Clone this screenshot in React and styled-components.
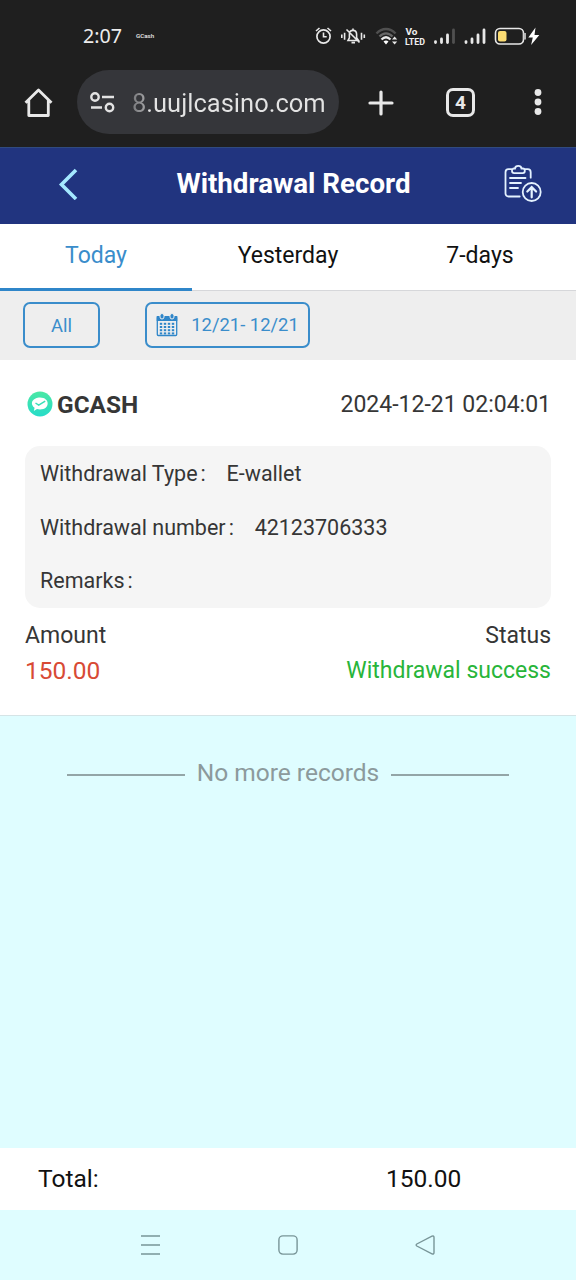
import React from "react";
import styled, { createGlobalStyle } from "styled-components";

const records = [
  { label: "Withdrawal Type", value: "E-wallet" },
  { label: "Withdrawal number", value: "42123706333" },
  { label: "Remarks", value: "" },
];
const tabs = ["Today", "Yesterday", "7-days"];

function StatusIcons() {
  return (
    <svg width="230" height="24" viewBox="312 24 230 24" fill="none" stroke="#e8e8e8">
      {/* alarm */}
      <circle cx="323.5" cy="36.5" r="6.6" strokeWidth="1.7" />
      <path d="M323.5 32.5v4.3h3.2M316 31l3.5-3M331 31l-3.5-3" strokeWidth="1.6" />
      {/* muted bell */}
      <path
        d="M348 40.5h10.5l-1.9-2.7v-3.5c0-5.2-7.2-5.2-7.2 0v3.5zM351.5 42.600h3.500M346.500 29.500l13 13M353 28.500v2"
        strokeWidth="1.6"
      />
      <path d="M344.6 32.8v7M341.8 34.5v3.500M361.500 32.800v7M364.300 34.500v3.500" strokeWidth="1.6" />
      {/* wifi */}
      <path d="M376.5 33.5c5.5-6 13.500-6 19 0" stroke="#505050" strokeWidth="2.4" />
      <path d="M379.5 36.5c4-4.200 9-4.200 13 0" stroke="#666" strokeWidth="2.4" />
      <path d="M381.5 39.5c3-2.900 6-2.900 9 0" strokeWidth="2.4" />
      <path d="M383.5 41.5l2.5 3 2.500-3c-1.700-1.200-3.300-1.200-5 0z" fill="#fff" stroke="none" />
      <path d="M392 39.5l2.6-3 2.600 3zM392 41.500l2.600 3 2.600-3z" fill="#e8e8e8" stroke="none" />
      {/* volte */}
      <g fill="#f0f0f0" stroke="none" fontFamily="Roboto, sans-serif" fontWeight="700">
        <text x="405.5" y="35" fontSize="9" textLength="12" lengthAdjust="spacingAndGlyphs">Vo</text>
        <text x="405" y="44.500" fontSize="9.5" textLength="20" lengthAdjust="spacingAndGlyphs">LTED</text>
      </g>
      {/* signal */}
      <g strokeWidth="2.8" strokeLinecap="round">
        <path d="M435.5 41.6v1M441.5 39v3.6M447.5 35v7.6" />
        <path d="M453.5 30v12.6" stroke="#505050" />
        <path d="M466 41.6v1M472 39v3.6M478 35v7.6M484 30v12.6" />
      </g>
      {/* battery */}
      <rect x="495.5" y="28.5" width="28" height="15.5" rx="4.5" strokeWidth="1.6" />
      <rect x="498" y="31" width="8.5" height="10.5" rx="2" fill="#fbdc72" stroke="none" />
      <path d="M524.8 33v6.5" stroke="#b5b5b5" strokeWidth="2.4" />
      <path d="M535.5 27.5l-7.2 10h4.500l-1.700 7.500 8.200-10h-4.800z" fill="#fff" stroke="none" />
    </svg>
  );
}

function HomeIcon() {
  return (
    <svg width="30" height="32" viewBox="0 0 30 32" fill="none" stroke="#e8e8e8" strokeWidth="2.8" strokeLinejoin="round">
      <path d="M1.5 15.8L14.5 3l13 12.800M4.800 13v15.500h19.500V13" />
    </svg>
  );
}

function SiteIcon() {
  return (
    <svg width="26" height="22" viewBox="0 0 26 22" fill="none" stroke="#e3e3e3" strokeWidth="2.4">
      <circle cx="5" cy="5" r="3.7" />
      <path d="M12 5h12M1 15.5h11" />
      <circle cx="19.5" cy="15.5" r="3.7" />
    </svg>
  );
}

function ClipboardIcon() {
  return (
    <svg width="38" height="38" viewBox="504 164 38 38" fill="none" stroke="#e4f2ff" strokeWidth="1.8" strokeLinecap="round">
      <path d="M511.5 168.2h-3a3 3 0 0 0-3 3v21.300a3 3 0 0 0 3 3h11.200M525.500 168.200h2.200a3 3 0 0 1 3 3v5.500" />
      <path d="M514 167.5h1c.5-3.400 6-3.400 6.500 0h1.300c2.700 0 2.700 4.700 0 4.700h-8.700c-2.800 0-2.800-4.700-.1-4.700z" />
      <path d="M510 177h15.5M510 182h11M510 187h8" />
      <circle cx="531.7" cy="191" r="9" />
      <path d="M531.7 196.3v-9.800M527.300 190.500l4.400-4.400 4.400 4.400" strokeWidth="2.2" />
    </svg>
  );
}

function CalendarIcon() {
  const dots = [];
  for (let row = 0; row < 4; row++) {
    for (let col = 0; col < 4; col++) {
      dots.push(<rect key={row + "-" + col} x={3.8 + col * 4} y={9.8 + row * 3.2} width="2.4" height="2" />);
    }
  }
  return (
    <svg width="22" height="24" viewBox="0 0 22 24" fill="#2f86c9">
      <rect x="1.3" y="3.7" width="19.4" height="18.8" rx="1" fill="none" stroke="#2f86c9" strokeWidth="1.3" />
      <rect x="0.7" y="3" width="20.6" height="5" />
      <rect x="4" y="0.5" width="4" height="5.5" rx="2" stroke="#eee" />
      <rect x="14" y="0.5" width="4" height="5.5" rx="2" stroke="#eee" />
      {dots}
    </svg>
  );
}

function WalletLogo() {
  return (
    <svg width="26" height="26" viewBox="0 0 26 26">
      <defs>
        <linearGradient id="mint" x1="0" y1="0" x2="0" y2="1">
          <stop offset="0" stopColor="#4be8a4" />
          <stop offset="1" stopColor="#26dcc9" />
        </linearGradient>
      </defs>
      <circle cx="13" cy="13" r="12.5" fill="url(#mint)" />
      <path d="M6.8 20l.8-3.200C1.800 12 6.500 6.500 13 6.500c10.300 0 10.300 12 0 12-1.200 0-2-.1-3-.4z" fill="#fff" />
      <path d="M8.5 12l3.200 2.200 6.500-4" fill="none" stroke="#3adfb8" strokeWidth="1.5" />
    </svg>
  );
}

function App() {
  return (
    <Phone>
      <GlobalStyle />
      <StatusBar>
        <Clock>2:07</Clock>
        <Carrier>GCash</Carrier>
        <StatusIcons />
      </StatusBar>
      <BrowserBar>
        <HomeIcon />
        <AddressPill>
          <SiteIcon />
          <Address>8.uujlcasino.com</Address>
        </AddressPill>
        <svg width="26" height="26" viewBox="0 0 26 26" stroke="#e8e8e8" strokeWidth="3.2" strokeLinecap="round">
          <path d="M13 2v22M2 13h22" />
        </svg>
        <TabCount>4</TabCount>
        <svg width="8" height="28" viewBox="0 0 8 28" fill="#e8e8e8">
          <circle cx="4" cy="4.5" r="3.4" />
          <circle cx="4" cy="14" r="3.4" />
          <circle cx="4" cy="23.5" r="3.4" />
        </svg>
      </BrowserBar>

      <PageHeader>
        <svg width="20" height="32" viewBox="0 0 20 32" fill="none" stroke="#a4e8ff" strokeWidth="3.6">
          <path d="M18 2L3.5 16.5 18 31" />
        </svg>
        <Title>Withdrawal Record</Title>
        <ClipboardIcon />
      </PageHeader>
      <TabRow>
        {tabs.map((tab, i) => (
          <Tab key={tab} $active={i === 0}>{tab}</Tab>
        ))}
      </TabRow>
      <FilterRow>
        <FilterButton $width={77}>All</FilterButton>
        <FilterButton $width={165}>
          <CalendarIcon />
          <DateRange>12/21- 12/21</DateRange>
        </FilterButton>
      </FilterRow>

      <Card>
        <CardTop>
          <WalletLogo />
          <WalletName>GCASH</WalletName>
          <DateText>2024-12-21 02:04:01</DateText>
        </CardTop>
        <Details>
          {records.map((item) => (
            <DetailRow key={item.label}>
              <span>{item.label}</span>
              <Colon>:</Colon>
              <span>{item.value}</span>
            </DetailRow>
          ))}
        </Details>
        <Summary>
          <SummaryText>Amount</SummaryText>
          <SummaryText>Status</SummaryText>
        </Summary>
        <Summary>
          <AmountText>150.00</AmountText>
          <StatusText>Withdrawal success</StatusText>
        </Summary>
      </Card>

      <Empty>
        <Line />
        <EmptyText>No more records</EmptyText>
        <Line />
      </Empty>
      <TotalBar>
        <TotalLabel>Total:</TotalLabel>
        <span>150.00</span>
      </TotalBar>
      <NavBar>
        <svg width="20" height="20" viewBox="0 0 20 20" stroke="#789598" strokeWidth="1.5">
          <path d="M0 1h19M0 10h19M0 19h19" />
        </svg>
        <svg width="20" height="20" viewBox="0 0 20 20" fill="none" stroke="#789598" strokeWidth="1.4">
          <rect x="0.9" y="0.9" width="18.2" height="18.2" rx="4" />
        </svg>
        <svg width="20" height="20" viewBox="0 0 20 20" fill="none" stroke="#789598" strokeWidth="1.4">
          <path d="M1.8 9L17 1.2q2-.8 2 1.300v15q0 2.200-2 1.300L1.800 11q-1.300-1 0-2z" />
        </svg>
      </NavBar>
    </Phone>
  );
}

export default App;

const GlobalStyle = createGlobalStyle`
  * {
    box-sizing: border-box;
  }
  body {
    margin: 0;
    background: #dffdff;
  }
  svg {
    flex-shrink: 0;
    display: block;
  }
`;
const Phone = styled.div`
  width: 576px;
  height: 1280px;
  display: flex;
  flex-direction: column;
  background: #dffdff;
  font-family: Roboto, sans-serif;
  white-space: nowrap;
  overflow: hidden;
`;
const StatusBar = styled.div`
  height: 70px;
  display: flex;
  align-items: center;
  padding: 2px 34px 0 83px;
  background: #1f1f1f;
  color: #ececec;
  svg {
    margin-left: auto;
  }
`;
const Clock = styled.span`
  width: 53px;
  padding-bottom: 1px;
  font-family: "Noto Sans", sans-serif;
  font-size: 19.7px;
`;
const Carrier = styled.span`
  font-size: 6.2px;
  font-weight: 500;
`;
const BrowserBar = styled.div`
  height: 78px;
  display: flex;
  align-items: flex-start;
  padding: 0 34px 0 24px;
  background: #1f1f1f;
  border-bottom: 1px solid #304a80;
  > svg:first-child {
    margin: 17px 23px 0 0;
  }
  > svg:nth-child(3) {
    margin: 20px 0 0 29px;
  }
  > svg:last-child {
    margin: 18px 0 0 auto;
  }
`;
const AddressPill = styled.div`
  width: 262px;
  height: 64px;
  display: flex;
  align-items: center;
  gap: 16px;
  padding: 2px 0 0 13px;
  border-radius: 32px;
  background: #35363a;
`;
const Address = styled.span`
  font-size: 25.5px;
  background: linear-gradient(90deg, #77787b, #a0a0a2 13px, #e3e3e3 16px);
  background-clip: text;
  color: transparent;
`;
const TabCount = styled.div`
  width: 29px;
  height: 29px;
  display: flex;
  align-items: center;
  justify-content: center;
  margin: 18px 0 0 52px;
  border: 3px solid #e8e8e8;
  border-radius: 7px;
  color: #e8e8e8;
  font-size: 19px;
  font-weight: 700;
`;
const PageHeader = styled.div`
  height: 76px;
  display: flex;
  align-items: center;
  justify-content: space-between;
  padding: 0 34px 5px 58px;
  background: #21347f;
`;
const Title = styled.h1`
  margin: 0 0 0 5px;
  color: #fff;
  font-size: 27.7px;
  font-weight: 700;
`;
const TabRow = styled.div`
  height: 67px;
  display: flex;
  background: #fff;
`;
const Tab = styled.div`
  flex: 1;
  display: flex;
  align-items: center;
  justify-content: center;
  padding-bottom: ${(p) => (p.$active ? "1px" : "3px")};
  border-bottom: ${(p) => (p.$active ? "3px solid #2f86c9" : "1px solid #d6d7da")};
  color: ${(p) => (p.$active ? "#3a8dcb" : "#111")};
  font-size: 23px;
`;
const FilterRow = styled.div`
  height: 69px;
  display: flex;
  gap: 45px;
  padding: 11px 23px;
  background: #eee;
`;
const FilterButton = styled.div`
  width: ${(p) => p.$width}px;
  height: 46px;
  display: flex;
  align-items: center;
  justify-content: center;
  gap: 13px;
  border: 2px solid #3a8dcb;
  border-radius: 7px;
  color: #3a8dcb;
  font-size: 18.4px;
`;
const DateRange = styled.span`
  padding-bottom: 2px;
`;
const Card = styled.div`
  height: 356px;
  padding: 0 25px;
  background: #fff;
  border-bottom: 1px solid #d5e4e6;
  color: #363636;
`;
const CardTop = styled.div`
  height: 86px;
  display: flex;
  align-items: center;
  padding: 2px 0 0 2px;
`;
const WalletName = styled.span`
  margin-left: 4px;
  font-size: 24.4px;
  font-weight: 700;
`;
const DateText = styled.span`
  margin-left: auto;
  font-size: 23px;
`;
const Details = styled.div`
  height: 162px;
  padding-top: 1px;
  border-radius: 15px;
  background: #f5f5f5;
`;
const DetailRow = styled.div`
  height: 53.5px;
  display: flex;
  align-items: center;
  padding-left: 15px;
  font-size: 21.5px;
`;
const Colon = styled.span`
  width: 29px;
  padding-left: 3px;
`;
const Summary = styled.div`
  height: 36px;
  display: flex;
  align-items: center;
  justify-content: space-between;
  padding-top: 18px;
  & + & {
    padding-top: 16px;
  }
`;
const SummaryText = styled.span`
  font-size: 23px;
`;
const AmountText = styled.span`
  color: #d84a35;
  font-size: 24.5px;
`;
const StatusText = styled.span`
  color: #28b53a;
  font-size: 23px;
`;
const Empty = styled.div`
  flex: 1;
  display: flex;
  align-items: flex-start;
  justify-content: center;
  gap: 12px;
  padding-top: 42px;
`;
const Line = styled.div`
  width: 118px;
  height: 2px;
  margin-top: 16px;
  background: #93a5a7;
`;
const EmptyText = styled.span`
  color: #8c9a9c;
  font-size: 24.5px;
  line-height: 30px;
`;
const TotalBar = styled.div`
  height: 62px;
  display: flex;
  align-items: center;
  padding: 0 0 2px 38px;
  background: #fff;
  color: #111;
  font-size: 24.5px;
`;
const TotalLabel = styled.span`
  width: 348px;
`;
const NavBar = styled.div`
  height: 70px;
  display: flex;
  align-items: center;
  justify-content: space-between;
  padding: 0 141px;
`;
